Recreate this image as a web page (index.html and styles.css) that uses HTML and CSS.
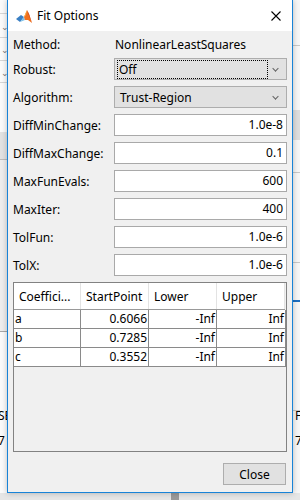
FILE: index.html
```html
<!DOCTYPE html>
<html>
<head>
<meta charset="utf-8">
<link rel="stylesheet" href="styles.css">
</head>
<body>
<div class="desk">
  <div class="bg-left">
    <div class="bl-line" style="top:13px"></div>
    <div class="bl-chev" style="top:22px">&#8964;</div>
    <div class="bl-line" style="top:37px"></div>
    <div class="bl-chev" style="top:45px">&#8964;</div>
    <div class="bl-line" style="top:60px"></div>
    <div class="bl-chev" style="top:68px">&#8964;</div>
    <div class="bl-line" style="top:82px"></div>
    <div class="bl-grey1"></div>
    <div class="bl-grey2"></div>
    <div class="bl-text" style="top:407px">SE</div>
    <div class="bl-text" style="top:432px">7</div>
  </div>
  <div class="bg-right">
    <div class="br-line" style="top:45px"></div>
    <div class="br-band"></div>
    <div class="br-line" style="top:172px"></div>
    <div class="br-line" style="top:262px"></div>
    <div class="br-blue"></div>
    <div class="br-line" style="top:410px"></div>
    <div class="br-text" style="top:407px">F</div>
    <div class="br-text br-num" style="top:432px">7</div>
  </div>
  <div class="bg-bottom"><div class="bb-knob"></div></div>

  <div class="dialog">
    <div class="titlebar">
      <svg class="logo" width="16" height="15" viewBox="0 0 16 15">
        <polygon points="0,10 5,6 8,8 4,13" fill="#3a7fc4"/>
        <polygon points="4,13 8,8 9,11" fill="#7cc0e8"/>
        <polygon points="8,8 11,1 13,5 16,14 12,11 9,11" fill="#f0701e"/>
        <polygon points="11,1 13,5 16,14 14,9" fill="#b52a14"/>
        <polygon points="8,8 11,1 10,6" fill="#f7b84a"/>
      </svg>
      <span class="title">Fit Options</span>
      <svg class="close-x" width="10" height="10" viewBox="0 0 10 10">
        <path d="M0.5 0.5 L9.5 9.5 M9.5 0.5 L0.5 9.5" stroke="#000" stroke-width="1.1"/>
      </svg>
    </div>
    <div class="body">
      <div class="form">
        <div class="row method">
          <span class="label">Method:</span>
          <span class="value">NonlinearLeastSquares</span>
        </div>
        <div class="row first">
          <span class="label">Robust:</span>
          <div class="combo"><span class="focus">Off</span><span class="chev"></span></div>
        </div>
        <div class="row">
          <span class="label">Algorithm:</span>
          <div class="combo"><span class="ctext">Trust-Region</span><span class="chev"></span></div>
        </div>
        <div class="row"><span class="label">DiffMinChange:</span><div class="field">1.0e-8</div></div>
        <div class="row"><span class="label">DiffMaxChange:</span><div class="field">0.1</div></div>
        <div class="row"><span class="label">MaxFunEvals:</span><div class="field">600</div></div>
        <div class="row"><span class="label">MaxIter:</span><div class="field">400</div></div>
        <div class="row"><span class="label">TolFun:</span><div class="field">1.0e-6</div></div>
        <div class="row"><span class="label">TolX:</span><div class="field">1.0e-6</div></div>
      </div>
      <div class="table">
        <div class="thead">
          <div class="th">Coeffici...</div>
          <div class="th">StartPoint</div>
          <div class="th">Lower</div>
          <div class="th">Upper</div>
        </div>
        <div class="tr">
          <div class="td left">a</div><div class="td">0.6066</div><div class="td">-Inf</div><div class="td">Inf</div>
        </div>
        <div class="tr">
          <div class="td left">b</div><div class="td">0.7285</div><div class="td">-Inf</div><div class="td">Inf</div>
        </div>
        <div class="tr">
          <div class="td left">c</div><div class="td">0.3552</div><div class="td">-Inf</div><div class="td">Inf</div>
        </div>
      </div>
      <div class="footer">
        <button class="btn">Close</button>
      </div>
    </div>
  </div>
</div>
</body>
</html>
```

FILE: styles.css
```css
* { box-sizing: border-box; }
html, body { margin: 0; padding: 0; }
body {
  width: 300px;
  height: 500px;
  overflow: hidden;
  font-family: "Noto Sans", "Open Sans", sans-serif;
  font-size: 12px;
  color: #000;
}
.desk {
  position: relative;
  width: 300px;
  height: 500px;
  background: #f0f0f0;
}
.bg-left {
  position: absolute;
  left: 0; top: 0;
  width: 8px; height: 500px;
  background: #fbfbfb;
  overflow: hidden;
}
.bl-line { position: absolute; left: 0; width: 8px; height: 1px; background: #d6d6d6; }
.bl-chev { position: absolute; left: 1px; font-size: 9px; line-height: 9px; color: #777; }
.bl-grey1 { position: absolute; left: 0; top: 132px; width: 8px; height: 28px; background: #e3e3e3; border-bottom: 1px solid #bdbdbd; }
.bl-grey2 { position: absolute; left: 0; top: 160px; width: 8px; height: 172px; background: #eeeeee; border-bottom: 1px solid #a8a8a8; }
.bl-text { position: absolute; left: -2px; font-size: 12px; color: #000; }
.bg-right {
  position: absolute;
  right: 0; top: 0;
  width: 7px; height: 500px;
  background: #f7f7f7;
  overflow: hidden;
}
.br-line { position: absolute; left: 0; width: 7px; height: 1px; background: #c8c8c8; }
.br-band { position: absolute; left: 0; top: 110px; width: 7px; height: 30px; background: #dedede; }
.br-blue { position: absolute; left: 0; top: 300px; width: 7px; height: 2px; background: #1e6fc0; }
.br-text { position: absolute; left: 2px; font-size: 12px; color: #000; }
.br-num { color: #000; }
.bg-bottom {
  position: absolute; left: 0; bottom: 0; width: 300px; height: 7px; background: #e6e6e6;
}
.bb-knob { position: absolute; left: 171px; top: 0; width: 8px; height: 7px; background: #9a9a9a; }

.dialog {
  position: absolute;
  left: 7px; top: 0;
  width: 286px; height: 493px;
  border: 1px solid #1883d7;
  border-top: none;
  background: #f0f0f0;
  display: flex;
  flex-direction: column;
  box-shadow: 0 0 6px rgba(0,0,0,0.25);
}
.titlebar {
  height: 31px;
  background: #fff;
  display: flex;
  align-items: center;
  padding-left: 8px;
  flex: none;
}
.logo { margin-right: 5px; margin-top: 1px; }
.title { font-size: 12px; flex: 1; }
.close-x { margin-right: 11px; }

.body {
  flex: 1;
  display: flex;
  flex-direction: column;
  padding: 2px 5px 0 5px;
}
.form { display: flex; flex-direction: column; gap: 6px; }
.row {
  display: grid;
  grid-template-columns: 101px 173px;
  height: 22px;
  align-items: center;
}
.row.method { margin-bottom: -3px; }
.label { padding-left: 0; white-space: nowrap; }
.value { padding-left: 1px; }
.combo {
  height: 22px;
  background: #e1e1e1;
  border: 1px solid #adadad;
  display: flex;
  align-items: center;
  padding: 1px 2px;
  position: relative;
}
.focus {
  flex: none;
  width: 151px;
  height: 19px;
  border: 1px dotted #000;
  line-height: 17px;
  padding-left: 1px;
}
.ctext { padding-left: 3px; }
.chev {
  position: absolute;
  right: 8px; top: 7px;
  width: 5px; height: 5px;
  border-right: 1px solid #606060;
  border-bottom: 1px solid #606060;
  transform: rotate(45deg) scale(0.9, 0.9);
}
.field {
  height: 22px;
  background: #fff;
  border: 1px solid #a9a9a9;
  text-align: right;
  padding-right: 3px;
  line-height: 20px;
}

.table {
  margin-top: 6px;
  height: 170px;
  border: 1px solid #828282;
  background: #f0f0f0;
  display: flex;
  flex-direction: column;
  width: 274px;
}
.thead {
  display: grid;
  grid-template-columns: 67px 68px 68px 68px;
  height: 27px;
  background: #fff;
  border-bottom: 1px solid #999;
  width: 271px;
}
.th {
  border-right: 1px solid #e3e3e3;
  padding-left: 5px;
  line-height: 27px;
  white-space: nowrap;
  overflow: hidden;
}
.tr {
  display: grid;
  grid-template-columns: 67px 68px 68px 68px;
  height: 19px;
  background: #fff;
  border-bottom: 1px solid #8a8a8a;
  width: 272px;
  border-right: 1px solid #8a8a8a;
}
.td {
  border-right: 1px solid #8a8a8a;
  text-align: right;
  line-height: 18px;
  padding-right: 1px;
}
.td:last-child { border-right: none; }
.td.left { text-align: left; padding-left: 1px; }

.footer {
  display: flex;
  justify-content: flex-end;
  margin-top: 11px;
}
.btn {
  width: 63px;
  height: 22px;
  background: #e1e1e1;
  border: 1px solid #adadad;
  font-family: inherit;
  font-size: 12px;
  color: #000;
  padding: 0;
  margin-right: 1px;
}
```
